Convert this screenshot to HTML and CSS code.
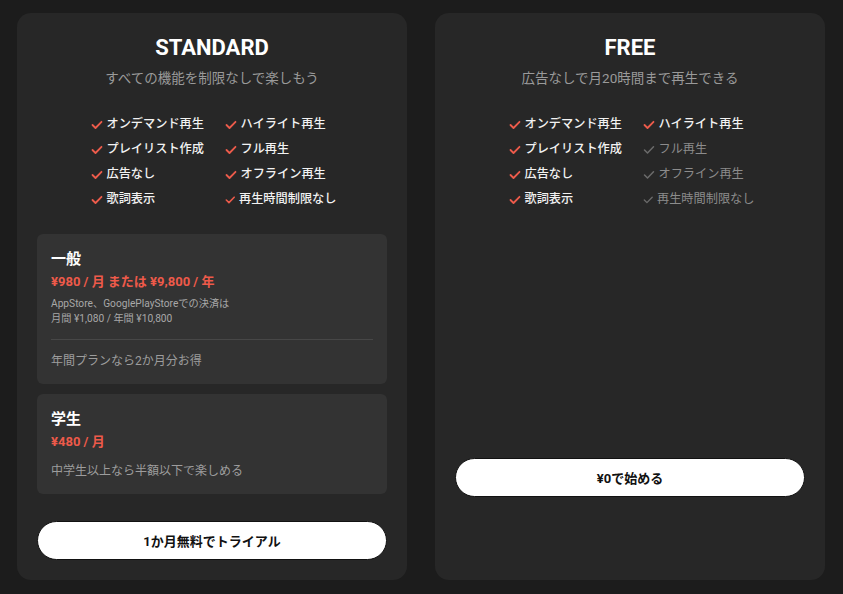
FILE: index.html
```html
<!DOCTYPE html>
<html lang="ja">
<head>
    <meta charset="utf-8">
    <title>プラン</title>
    <meta name="viewport" content="width=device-width, initial-scale=1">
    <link rel="stylesheet" href="styles.css">
</head>
<body>
    <div class="plans">
        <section class="card">
            <h2 class="card-title">STANDARD</h2>
            <p class="card-sub">すべての機能を制限なしで楽しもう</p>
            <ul class="features">
                <li class="on"><svg class="check" viewBox="0 0 12 10"><path d="M1.5 5 L4.5 8 L10.5 1.8"/></svg>オンデマンド再生</li>
                <li class="on"><svg class="check" viewBox="0 0 12 10"><path d="M1.5 5 L4.5 8 L10.5 1.8"/></svg>ハイライト再生</li>
                <li class="on"><svg class="check" viewBox="0 0 12 10"><path d="M1.5 5 L4.5 8 L10.5 1.8"/></svg>プレイリスト作成</li>
                <li class="on"><svg class="check" viewBox="0 0 12 10"><path d="M1.5 5 L4.5 8 L10.5 1.8"/></svg>フル再生</li>
                <li class="on"><svg class="check" viewBox="0 0 12 10"><path d="M1.5 5 L4.5 8 L10.5 1.8"/></svg>広告なし</li>
                <li class="on"><svg class="check" viewBox="0 0 12 10"><path d="M1.5 5 L4.5 8 L10.5 1.8"/></svg>オフライン再生</li>
                <li class="on"><svg class="check" viewBox="0 0 12 10"><path d="M1.5 5 L4.5 8 L10.5 1.8"/></svg>歌詞表示</li>
                <li class="on"><svg class="check" viewBox="0 0 12 10"><path d="M1.5 5 L4.5 8 L10.5 1.8"/></svg>再生時間制限なし</li>
            </ul>

            <div class="price-box">
                <h3 class="price-name">一般</h3>
                <p class="price">¥980 / 月 または ¥9,800 / 年</p>
                <p class="price-small">AppStore、GooglePlayStoreでの決済は<br>月間 ¥1,080 / 年間 ¥10,800</p>
                <hr class="divider">
                <p class="price-note">年間プランなら2か月分お得</p>
            </div>
            <div class="price-box">
                <h3 class="price-name">学生</h3>
                <p class="price">¥480 / 月</p>
                <p class="price-note spaced">中学生以上なら半額以下で楽しめる</p>
            </div>

            <button class="btn" type="button">1か月無料でトライアル</button>
        </section>

        <section class="card card-free">
            <h2 class="card-title">FREE</h2>
            <p class="card-sub">広告なしで月20時間まで再生できる</p>
            <ul class="features">
                <li class="on"><svg class="check" viewBox="0 0 12 10"><path d="M1.5 5 L4.5 8 L10.5 1.8"/></svg>オンデマンド再生</li>
                <li class="on"><svg class="check" viewBox="0 0 12 10"><path d="M1.5 5 L4.5 8 L10.5 1.8"/></svg>ハイライト再生</li>
                <li class="on"><svg class="check" viewBox="0 0 12 10"><path d="M1.5 5 L4.5 8 L10.5 1.8"/></svg>プレイリスト作成</li>
                <li class="off"><svg class="check" viewBox="0 0 12 10"><path d="M1.5 5 L4.5 8 L10.5 1.8"/></svg>フル再生</li>
                <li class="on"><svg class="check" viewBox="0 0 12 10"><path d="M1.5 5 L4.5 8 L10.5 1.8"/></svg>広告なし</li>
                <li class="off"><svg class="check" viewBox="0 0 12 10"><path d="M1.5 5 L4.5 8 L10.5 1.8"/></svg>オフライン再生</li>
                <li class="on"><svg class="check" viewBox="0 0 12 10"><path d="M1.5 5 L4.5 8 L10.5 1.8"/></svg>歌詞表示</li>
                <li class="off"><svg class="check" viewBox="0 0 12 10"><path d="M1.5 5 L4.5 8 L10.5 1.8"/></svg>再生時間制限なし</li>
            </ul>

            <button class="btn" type="button">¥0で始める</button>
        </section>
    </div>
</body>
</html>
```

FILE: styles.css
```css
html {
    font-family: Roboto, "Noto Sans CJK JP", sans-serif;
}
body {
    margin: 0;
    background: #1c1c1c;
    color: #fff;
    height: 594px;
    overflow: hidden;
}
.plans {
    display: grid;
    grid-template-columns: 390px 390px;
    column-gap: 28px;
    padding: 13px 18px 0 17px;
}
.card {
    display: flex;
    flex-direction: column;
    background: #272727;
    border-radius: 14px;
    padding: 23px 20px 20px;
}
.card-free {
    padding-bottom: 83px;
}
.card-title {
    margin: 0;
    text-align: center;
    font-size: 22px;
    line-height: 24px;
    font-weight: 700;
    color: #fff;
}
.card-sub {
    margin: 8px 0 0;
    text-align: center;
    font-size: 13.5px;
    line-height: 20px;
    color: #9a9a9a;
}
.features {
    list-style: none;
    margin: 24px 0 0;
    padding: 0 0 0 3px;
    display: grid;
    grid-template-columns: 134px 112px;
    justify-content: center;
}
.features li {
    display: flex;
    align-items: center;
    font-size: 12.2px;
    line-height: 25px;
    font-weight: 500;
    color: #f2f2f2;
    white-space: nowrap;
}
.check {
    width: 12px;
    height: 10px;
    margin-right: 4px;
    fill: none;
    stroke: #ec5b4b;
    stroke-width: 1.8;
    stroke-linecap: round;
    stroke-linejoin: round;
}
.features li.off {
    color: #8c8c8c;
    font-weight: 400;
}
.features li.off .check {
    stroke: #6b6b6b;
    stroke-width: 1.5;
}
.price-box {
    background: #333;
    border-radius: 6px;
    padding: 14px 14px 14px;
    margin-top: 10px;
}
.features + .price-box {
    margin-top: 22px;
}
.price-name {
    margin: 0;
    font-size: 15px;
    line-height: 22px;
    font-weight: 700;
    color: #fff;
}
.price {
    margin: 2px 0 0;
    font-size: 13px;
    line-height: 20px;
    font-weight: 700;
    color: #ee5a4a;
}
.price-small {
    margin: 4px 0 0;
    font-size: 10.2px;
    line-height: 15px;
    color: #a8a8a8;
}
.divider {
    border: 0;
    border-top: 1px solid #474747;
    margin: 13px 0 0;
}
.price-note {
    margin: 12px 0 0;
    font-size: 12px;
    line-height: 18px;
    color: #9d9d9d;
}
.price-note.spaced {
    margin-top: 10px;
}
.btn {
    margin-top: 27px;
    height: 39px;
    width: 100%;
    border: 1px solid #111;
    border-radius: 20px;
    background: #fff;
    color: #111;
    font-family: Roboto, "Noto Sans CJK JP", sans-serif;
    font-size: 13px;
    font-weight: 700;
}
.card-free .btn {
    margin-top: auto;
}
```
